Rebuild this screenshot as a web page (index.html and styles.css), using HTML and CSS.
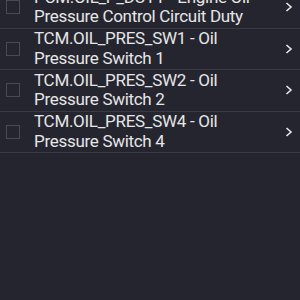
FILE: index.html
```html
<!DOCTYPE html>
<html lang="en">
<head>
    <meta charset="UTF-8">
    <meta name="viewport" content="width=device-width, initial-scale=1.0">
    <title>PIDs</title>
    <link rel="stylesheet" href="styles.css">
</head>
<body>
    <ul class="lista">
        <li class="item">
            <span class="caixa"></span>
            <span class="texto">PCM.OIL_P_DUTY - Engine Oil Pressure Control Circuit Duty</span>
            <svg class="seta" width="10" height="12" viewBox="0 0 10 12"><path d="M2.5 2 L7 6 L2.5 10" fill="none" stroke="#e6e6e6" stroke-width="1.6"/></svg>
        </li>
        <li class="item">
            <span class="caixa"></span>
            <span class="texto">TCM.OIL_PRES_SW1 - Oil Pressure Switch 1</span>
            <svg class="seta" width="10" height="12" viewBox="0 0 10 12"><path d="M2.5 2 L7 6 L2.5 10" fill="none" stroke="#e6e6e6" stroke-width="1.6"/></svg>
        </li>
        <li class="item">
            <span class="caixa"></span>
            <span class="texto">TCM.OIL_PRES_SW2 - Oil Pressure Switch 2</span>
            <svg class="seta" width="10" height="12" viewBox="0 0 10 12"><path d="M2.5 2 L7 6 L2.5 10" fill="none" stroke="#e6e6e6" stroke-width="1.6"/></svg>
        </li>
        <li class="item">
            <span class="caixa"></span>
            <span class="texto">TCM.OIL_PRES_SW4 - Oil Pressure Switch 4</span>
            <svg class="seta" width="10" height="12" viewBox="0 0 10 12"><path d="M2.5 2 L7 6 L2.5 10" fill="none" stroke="#e6e6e6" stroke-width="1.6"/></svg>
        </li>
    </ul>
</body>
</html>
```

FILE: styles.css
```css
body {
    margin: 0;
    background-color: #25252f;
    font-family: Roboto, "Noto Sans", sans-serif;
    color: #e6e6e6;
}

.lista {
    list-style: none;
    margin: -13px 0 0 0; /* a lista está rolada para cima */
    padding: 0;
}

.item {
    display: flex;
    align-items: center;
    height: 40.5px;
    border-bottom: 1px solid #3a3a44;
    padding: 0 6px 0 6px;
}

.caixa {
    width: 12px;
    height: 12px;
    border: 1px solid #4a4a54;
    flex-shrink: 0;
    margin-right: 14px;
}

.texto {
    flex: 1;
    font-size: 17px;
    letter-spacing: -0.3px;
    line-height: 19.5px;
}

.seta {
    flex-shrink: 0;
}
```
